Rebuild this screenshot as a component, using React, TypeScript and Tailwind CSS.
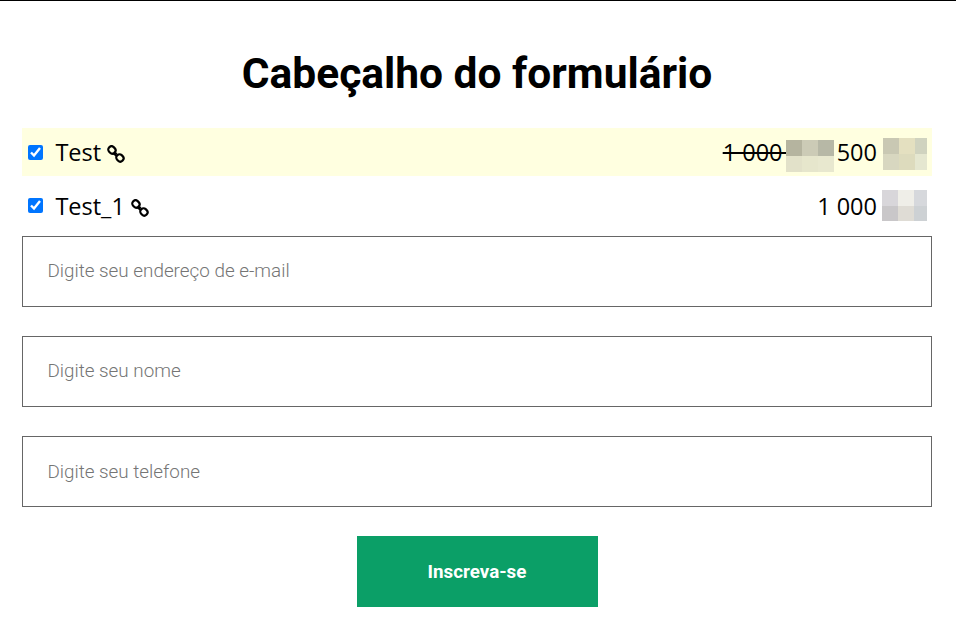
interface Product {
  name: string;
  price: string;
  oldPrice?: string;
  highlighted?: boolean;
}

const products: Product[] = [
  { name: "Test", price: "500", oldPrice: "1 000", highlighted: true },
  { name: "Test_1", price: "1 000" },
];

const fields = [
  { type: "email", placeholder: "Digite seu endereço de e-mail", spacing: "pb-px" },
  { type: "text", placeholder: "Digite seu nome", spacing: "pb-px" },
  { type: "tel", placeholder: "Digite seu telefone", spacing: "pb-0" },
];

function LinkIcon() {
  return (
    <svg viewBox="0 0 18 18" className="w-[18px] h-[18px] shrink-0" fill="none" stroke="currentColor" strokeWidth="2.2">
      <rect x="1.2" y="1.7" width="7.4" height="6.4" rx="3" transform="rotate(45 4.9 4.9)" />
      <rect x="9.2" y="9.7" width="7.4" height="6.4" rx="3" transform="rotate(45 12.9 12.9)" />
      <path d="M6.2 9.6c1-1.3 2.4-1.5 3.6-.6M8.2 8.4c-.2 1.2.5 2.2 1.8 2.4" />
    </svg>
  );
}

function OldCurrency() {
  return (
    <span className="grid grid-cols-[16px_16px_16px] grid-rows-[16px_16px] mt-[7px]">
      <span className="bg-[#b5b49f]" />
      <span className="bg-[#cccbb6]" />
      <span className="bg-[#b7b8a6]" />
      <span className="bg-[#e2e1c9]" />
      <span className="bg-[#e6e6cc]" />
      <span className="bg-[#e8e8cf]" />
    </span>
  );
}

function Currency({ highlighted }: { highlighted?: boolean }) {
  if (highlighted) {
    return (
      <span className="grid grid-cols-[16px_16px_12px] grid-rows-[16px_16px] mt-[3px]">
        <span className="bg-[#c9c8b3]" />
        <span className="bg-[#e4e0c0]" />
        <span className="bg-[#d0d3bf]" />
        <span className="bg-[#d8d7c0]" />
        <span className="bg-[#dddbbd]" />
        <span className="bg-[#e5e7d0]" />
      </span>
    );
  }
  return (
    <span className="grid grid-cols-[16px_16px_13px] grid-rows-[16px_15px]">
      <span className="bg-[#d8d6da]" />
      <span className="bg-[#efeee8]" />
      <span className="bg-[#d6d8dc]" />
      <span className="bg-[#c9c7c9]" />
      <span className="bg-[#dfdcd5]" />
      <span className="bg-[#cdd1d4]" />
    </span>
  );
}

function ProductRow({ name, price, oldPrice, highlighted }: Product) {
  return (
    <div
      className={`flex items-center justify-between h-12 pl-[6px] pr-[5px] font-['Open_Sans',sans-serif] text-[23.5px] leading-8 ${
        highlighted ? "bg-[#ffffe0]" : ""
      }`}
    >
      <label className="flex items-center">
        <input type="checkbox" defaultChecked className="w-[15px] h-[15px] m-0 mr-[12.4px] accent-[#0075ff]" />
        <span className={highlighted ? "-mt-px" : "mt-px"}>{name}</span>
        <span className={highlighted ? "ml-[6px] mt-[3px]" : "ml-[6px] mt-[5px]"}>
          <LinkIcon />
        </span>
      </label>
      <div className="flex items-center whitespace-pre">
        {oldPrice && (
          <>
            <s className="-mt-px decoration-2 w-[63px]">{oldPrice + " "}</s>
            <OldCurrency />
          </>
        )}
        <span className={highlighted ? "-mt-px ml-[3px] mr-[6px]" : "mt-px mr-[5px]"}>{price}</span>
        <Currency highlighted={highlighted} />
      </div>
    </div>
  );
}

export default function App() {
  return (
    <div className="h-[630px] border-t border-black bg-white text-black overflow-hidden">
      <form className="flex flex-col pl-[22px] pr-6" onSubmit={(e) => e.preventDefault()}>
        <h1 className="mt-[48px] mb-[30px] text-center font-['Roboto',sans-serif] text-[42.5px] leading-[49px] font-bold">
          Cabeçalho do formulário
        </h1>
        <div className="flex flex-col gap-[5px] mb-[7px]">
          {products.map((product) => (
            <ProductRow key={product.name} {...product} />
          ))}
        </div>
        <div className="flex flex-col gap-[29px]">
          {fields.map((field) => (
            <input
              key={field.type}
              type={field.type}
              placeholder={field.placeholder}
              className={`h-[71px] w-full border border-[#666] pl-[24.4px] pr-6 font-['Roboto',sans-serif] text-[18.85px] font-light text-black placeholder:text-[#757575] placeholder:opacity-100 ${field.spacing}`}
            />
          ))}
        </div>
        <button className="mt-[29px] self-center h-[71px] w-[241px] pt-[2px] bg-[#0b9f67] text-white font-['Roboto',sans-serif] text-[18.8px] font-bold">
          Inscreva-se
        </button>
      </form>
    </div>
  );
}
